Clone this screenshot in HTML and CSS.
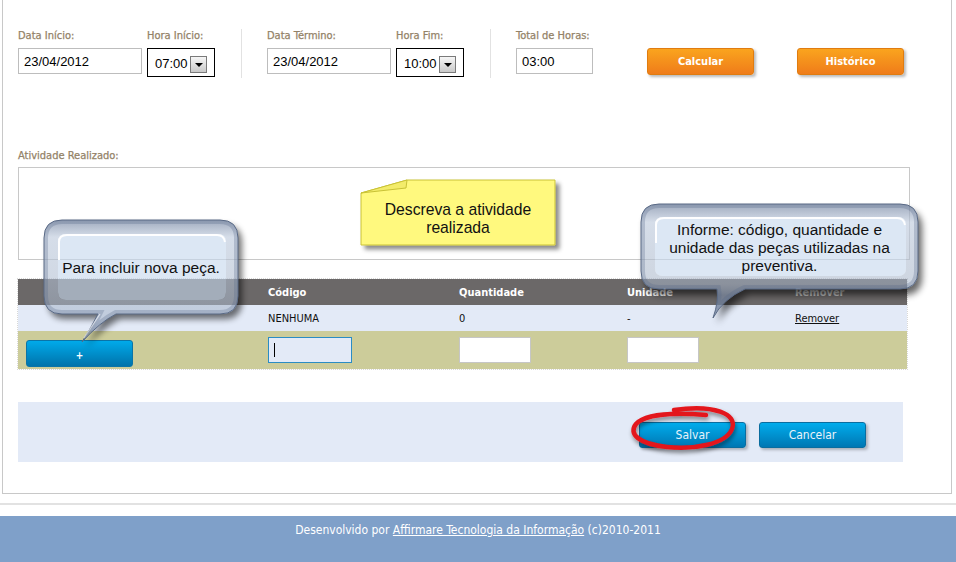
FILE: index.html
```html
<!DOCTYPE html>
<html lang="pt-BR">
<head>
<meta charset="utf-8">
<title>Preventiva</title>
<link rel="stylesheet" href="styles.css">
</head>
<body>
<div class="page">
  <div class="main">
    <div class="fields">
      <div class="field">
        <div class="lbl">Data Início:</div>
        <div class="inp w124">23/04/2012</div>
      </div>
      <div class="field">
        <div class="lbl">Hora Início:</div>
        <div class="sel"><span>07:00</span><span class="arrow"></span></div>
      </div>
      <div class="vsep"></div>
      <div class="field">
        <div class="lbl">Data Término:</div>
        <div class="inp w124">23/04/2012</div>
      </div>
      <div class="field">
        <div class="lbl">Hora Fim:</div>
        <div class="sel"><span>10:00</span><span class="arrow"></span></div>
      </div>
      <div class="vsep"></div>
      <div class="field">
        <div class="lbl">Total de Horas:</div>
        <div class="inp w77">03:00</div>
      </div>
      <div class="btn-orange calc">Calcular</div>
      <div class="btn-orange hist">Histórico</div>
    </div>

    <div class="activity">
      <div class="lbl">Atividade Realizado:</div>
      <div class="textarea"></div>
    </div>

    <div class="tbl">
      <div class="tr th">
        <div></div><div>Código</div><div>Quantidade</div><div>Unidade</div><div class="th-rem">Remover</div>
      </div>
      <div class="tr r1">
        <div></div><div>NENHUMA</div><div>0</div><div>-</div><div><span class="link">Remover</span></div>
      </div>
      <div class="tr r2">
        <div class="plus-cell"><div class="btn-plus">+</div></div>
        <div><div class="cell-inp focus w84"><span class="caret"></span></div></div>
        <div><div class="cell-inp w72"></div></div>
        <div><div class="cell-inp w72"></div></div>
        <div></div>
      </div>
    </div>

    <div class="actions">
      <div class="btn-blue">Salvar</div>
      <div class="btn-blue">Cancelar</div>
    </div>
  </div>

  <div class="rule"></div>
  <div class="footer">Desenvolvido por <span class="flink">Affirmare Tecnologia da Informação</span> (c)2010-2011</div>

  <!-- yellow note -->
  <div class="note">
    <svg width="215" height="82" viewBox="0 0 215 82">
      <defs>
        <filter id="nsh" x="-10%" y="-10%" width="130%" height="140%">
          <feDropShadow dx="4" dy="4" stdDeviation="2" flood-color="#000" flood-opacity="0.45"/>
        </filter>
      </defs>
      <polygon points="6,18 52,5 200,5 200,70 6,70" fill="#fff97e" stroke="#c9c236" stroke-width="1" filter="url(#nsh)"/>
      <polygon points="6,18 52,5 51,13" fill="#f3ec6a" stroke="#c9c236" stroke-width="1"/>
    </svg>
    <div class="note-text">Descreva a atividade<br>realizada</div>
  </div>

  <!-- left bubble -->
  <div class="bubble-left">
    <svg width="240" height="145" viewBox="0 0 240 145">
      <defs>
        <linearGradient id="ringL" x1="0" y1="0" x2="0" y2="1">
          <stop offset="0" stop-color="#7d8ca6" stop-opacity="0.75"/>
          <stop offset="0.14" stop-color="#bfcbdd" stop-opacity="0.65"/>
          <stop offset="0.8" stop-color="#a6b4c8" stop-opacity="0.55"/>
          <stop offset="1" stop-color="#76849c" stop-opacity="0.7"/>
        </linearGradient>
        <mask id="mL" maskUnits="userSpaceOnUse" x="0" y="0" width="240" height="145">
          <rect width="240" height="145" fill="#fff"/>
          <path d="M32 10 H190 Q208 10 208 28 V86 Q208 104 190 104 H86 Q70 112 52 132 Q62 116 68 104 H32 Q14 104 14 86 V28 Q14 10 32 10 Z" fill="#000"/>
        </mask>
        <clipPath id="cL">
          <path d="M32 10 H190 Q208 10 208 28 V86 Q208 104 190 104 H86 Q70 112 52 132 Q62 116 68 104 H32 Q14 104 14 86 V28 Q14 10 32 10 Z"/>
        </clipPath>
        <filter id="blurL" x="-20%" y="-20%" width="140%" height="140%">
          <feGaussianBlur stdDeviation="3"/>
        </filter>
      </defs>
      <g mask="url(#mL)">
        <path d="M32 10 H190 Q208 10 208 28 V86 Q208 104 190 104 H86 Q70 112 52 132 Q62 116 68 104 H32 Q14 104 14 86 V28 Q14 10 32 10 Z" transform="translate(4,5)" fill="#000" opacity="0.55" filter="url(#blurL)"/>
      </g>
      <path d="M36 24 H188 Q196 24 196 32 V82 Q196 90 188 90 H36 Q28 90 28 82 V32 Q28 24 36 24 Z" fill="#c7d8ee" fill-opacity="0.62"/>
      <path fill-rule="evenodd" fill="url(#ringL)" d="M32 10 H190 Q208 10 208 28 V86 Q208 104 190 104 H86 Q70 112 52 132 Q62 116 68 104 H32 Q14 104 14 86 V28 Q14 10 32 10 Z M36 24 H188 Q196 24 196 32 V82 Q196 90 188 90 H36 Q28 90 28 82 V32 Q28 24 36 24 Z"/>
      <g clip-path="url(#cL)">
        <path d="M32 10 H190 Q208 10 208 28 V86 Q208 104 190 104 H86 Q70 112 52 132 Q62 116 68 104 H32 Q14 104 14 86 V28 Q14 10 32 10 Z" fill="none" stroke="#56678a" stroke-opacity="0.28" stroke-width="8"/>
      </g>
      <path d="M32 10 H190 Q208 10 208 28 V86 Q208 104 190 104 H86 Q70 112 52 132 Q62 116 68 104 H32 Q14 104 14 86 V28 Q14 10 32 10 Z" fill="none" stroke="#5a6a86" stroke-width="1"/>
      <path d="M29 50 V32 Q29 25 37 25 H187 Q194 25 195 32" fill="none" stroke="#fff" stroke-width="2" stroke-opacity="0.95"/>
      <path d="M70 104 Q62 116 54 128" fill="none" stroke="#fff" stroke-width="1.2" stroke-opacity="0.6"/>
    </svg>
    <div class="bl-text">Para incluir nova peça.</div>
  </div>

  <!-- right bubble -->
  <div class="bubble-right">
    <svg width="315" height="140" viewBox="0 0 315 140">
      <defs>
        <linearGradient id="ringR" x1="0" y1="0" x2="0" y2="1">
          <stop offset="0" stop-color="#7d8ca6" stop-opacity="0.75"/>
          <stop offset="0.16" stop-color="#bfcbdd" stop-opacity="0.65"/>
          <stop offset="0.7" stop-color="#a6b4c8" stop-opacity="0.55"/>
          <stop offset="0.8" stop-color="#76849c" stop-opacity="0.7"/>
          <stop offset="1" stop-color="#8898b0" stop-opacity="0.7"/>
        </linearGradient>
        <mask id="mR" maskUnits="userSpaceOnUse" x="0" y="0" width="315" height="140">
          <rect width="315" height="140" fill="#fff"/>
          <path d="M34 9 H275 Q293 9 293 27 V76 Q293 94 275 94 H120 Q98 104 88 123 Q94 106 92 94 H34 Q16 94 16 76 V27 Q16 9 34 9 Z" fill="#000"/>
        </mask>
        <clipPath id="cR">
          <path d="M34 9 H275 Q293 9 293 27 V76 Q293 94 275 94 H120 Q98 104 88 123 Q94 106 92 94 H34 Q16 94 16 76 V27 Q16 9 34 9 Z"/>
        </clipPath>
        <filter id="blurR" x="-20%" y="-20%" width="140%" height="140%">
          <feGaussianBlur stdDeviation="3.5"/>
        </filter>
      </defs>
      <g mask="url(#mR)">
        <path d="M34 9 H275 Q293 9 293 27 V76 Q293 94 275 94 H120 Q98 104 88 123 Q94 106 92 94 H34 Q16 94 16 76 V27 Q16 9 34 9 Z" transform="translate(4,6)" fill="#000" opacity="0.6" filter="url(#blurR)"/>
      </g>
      <path d="M38 22 H273 Q281 22 281 30 V73 Q281 81 273 81 H38 Q30 81 30 73 V30 Q30 22 38 22 Z" fill="#c7d8ee" fill-opacity="0.62"/>
      <path fill-rule="evenodd" fill="url(#ringR)" d="M34 9 H275 Q293 9 293 27 V76 Q293 94 275 94 H120 Q98 104 88 123 Q94 106 92 94 H34 Q16 94 16 76 V27 Q16 9 34 9 Z M38 22 H273 Q281 22 281 30 V73 Q281 81 273 81 H38 Q30 81 30 73 V30 Q30 22 38 22 Z"/>
      <g clip-path="url(#cR)">
        <path d="M34 9 H275 Q293 9 293 27 V76 Q293 94 275 94 H120 Q98 104 88 123 Q94 106 92 94 H34 Q16 94 16 76 V27 Q16 9 34 9 Z" fill="none" stroke="#56678a" stroke-opacity="0.28" stroke-width="8"/>
      </g>
      <path d="M34 9 H275 Q293 9 293 27 V76 Q293 94 275 94 H120 Q98 104 88 123 Q94 106 92 94 H34 Q16 94 16 76 V27 Q16 9 34 9 Z" fill="none" stroke="#5a6a86" stroke-width="1"/>
      <path d="M31 48 V30 Q31 23 39 23 H272 Q279 23 280 30" fill="none" stroke="#fff" stroke-width="2" stroke-opacity="0.95"/>
    </svg>
    <div class="br-text">Informe: código, quantidade e<br>unidade das peças utilizadas na<br>preventiva.</div>
  </div>

  <!-- red hand-drawn circle -->
  <div class="redmark">
    <svg width="140" height="70" viewBox="0 0 140 70">
      <defs>
        <filter id="rsh" x="-10%" y="-10%" width="130%" height="150%">
          <feDropShadow dx="1" dy="3" stdDeviation="2" flood-color="#000" flood-opacity="0.45"/>
        </filter>
      </defs>
      <g filter="url(#rsh)">
        <path d="M54 12 C94 6 118 16 112 31 C106 46 74 52 47 49 C19 46 8 36 16 26 C24 17 50 14 86 17" fill="none" stroke="#e3161c" stroke-width="4.5" stroke-linecap="round"/>
        <path d="M54 12 C70 10 84 10 96 12" fill="none" stroke="#e3161c" stroke-width="2" stroke-linecap="round"/>
      </g>
    </svg>
  </div>
</div>
</body>
</html>
```

FILE: styles.css
```css
html, body {
  margin: 0;
  padding: 0;
  background: #fff;
}
body {
  font-family: "DejaVu Sans Condensed", "DejaVu Sans", sans-serif;
  font-size: 11px;
  color: #222;
  overflow: hidden;
}
.page {
  position: relative;
  width: 956px;
  height: 562px;
  overflow: hidden;
}
.main {
  margin-left: 2px;
  width: 933px;
  border-left: 1px solid #c8c8c8;
  border-right: 1px solid #c8c8c8;
  border-bottom: 1px solid #c8c8c8;
  padding: 29px 0 31px 15px;
  box-sizing: content-box;
}
.main > * { box-sizing: border-box; }
.fields {
  display: flex;
  align-items: flex-start;
  height: 49px;
}
.field {
  display: flex;
  flex-direction: column;
  margin-right: 5px;
}
.lbl {
  color: #938267;
  -webkit-text-stroke: 0.25px #938267;
  font-size: 11px;
  line-height: 13px;
  height: 13px;
  margin-bottom: 6px;
  white-space: nowrap;
}
.inp {
  height: 26px;
  border: 1px solid #bdbdbd;
  box-sizing: border-box;
  font-family: "Liberation Sans", Arial, sans-serif;
  font-size: 13px;
  line-height: 25px;
  padding-left: 5px;
  color: #000;
}
.w124 { width: 124px; }
.w77 { width: 77px; }
.sel {
  width: 68px;
  height: 29px;
  border: 1px solid #000;
  box-sizing: border-box;
  display: flex;
  align-items: center;
  padding-left: 7px;
  font-family: "Liberation Sans", Arial, sans-serif;
  font-size: 13px;
  color: #000;
}
.sel span:first-child { margin-top: 2px; }
.arrow {
  position: relative;
  width: 17px;
  height: 17px;
  margin-left: 2px;
  margin-top: 3px;
  box-sizing: border-box;
  border: 1px solid #7a7a7a;
  background: linear-gradient(#f6f6f6, #c9c9c9);
}
.arrow::after {
  content: "";
  position: absolute;
  left: 4px;
  top: 6px;
  border-left: 4px solid transparent;
  border-right: 4px solid transparent;
  border-top: 4px solid #000;
}
.vsep {
  width: 1px;
  height: 49px;
  background: #e2e2e2;
  margin: 0 25px 0 21px;
}
.btn-orange {
  width: 107px;
  height: 27px;
  margin-top: 19px;
  box-sizing: border-box;
  border: 1px solid #e07c10;
  border-radius: 3px;
  background: linear-gradient(#faa41e, #ef7c1a);
  box-shadow: 2px 2px 3px rgba(0, 0, 0, 0.28);
  color: #fff;
  font-weight: bold;
  font-size: 11px;
  display: flex;
  align-items: center;
  justify-content: center;
}
.calc { margin-left: 49px; }
.hist { margin-left: 43px; }

.activity { margin-top: 71px; }
.activity .lbl { margin-bottom: 5px; }
.textarea {
  width: 892px;
  height: 93px;
  border: 1px solid #c8c8c8;
  box-sizing: border-box;
}

.tbl {
  margin-top: 19px;
  width: 889px;
  outline: 1px dotted #d8d8d8;
}
.tr {
  display: grid;
  grid-template-columns: 250px 191px 168px 168px 1fr;
  align-items: center;
}
.th {
  height: 26px;
  background: #6b6868;
  color: #fff;
  font-weight: bold;
}
.th-rem { color: #c4c4c4; }
.r1 {
  height: 26px;
  background: #e3eaf7;
  color: #111;
}
.link { text-decoration: underline; }
.r2 {
  height: 38px;
  background: #cccc9a;
}
.plus-cell {
  align-self: end;
  padding-left: 8px;
  padding-bottom: 2px;
}
.btn-plus {
  width: 107px;
  height: 27px;
  box-sizing: border-box;
  border: 1px solid #0a74a8;
  border-radius: 3px;
  background: linear-gradient(#00aaea, #0073ab);
  color: #fff;
  font-size: 10px;
  font-weight: bold;
  display: flex;
  align-items: center;
  justify-content: center;
  padding-top: 3px;
}
.cell-inp {
  height: 26px;
  box-sizing: border-box;
  border: 1px solid #c6c6c6;
  background: #fff;
  position: relative;
}
.cell-inp.focus {
  border: 1px solid #2a8cc4;
  background: #e3eaf7;
}
.caret {
  position: absolute;
  left: 5px;
  top: 5px;
  width: 1px;
  height: 14px;
  background: #000;
}
.w84 { width: 84px; }
.w72 { width: 72px; }

.actions {
  margin-top: 33px;
  width: 885px;
  height: 60px;
  background: #e3eaf7;
  display: flex;
  justify-content: flex-end;
  align-items: flex-start;
  gap: 13px;
  padding: 20px 37px 0 0;
}
.btn-blue {
  width: 107px;
  height: 26px;
  box-sizing: border-box;
  border: 1px solid #0a6d9f;
  border-radius: 3px;
  background: linear-gradient(#00acec, #0077b3);
  box-shadow: 2px 2px 3px rgba(0, 0, 0, 0.25);
  color: #e9f3fa;
  font-size: 12px;
  display: flex;
  align-items: center;
  justify-content: center;
}

.rule {
  margin-top: 9px;
  height: 0;
  border-top: 2px solid #e2e2e2;
}
.footer {
  margin-top: 11px;
  height: 46px;
  background: #7fa0c9;
  color: #fff;
  font-size: 12px;
  text-align: center;
  padding-top: 7px;
  box-sizing: border-box;
}
.flink { text-decoration: underline; }

/* overlays */
.note {
  position: absolute;
  left: 355px;
  top: 175px;
  width: 215px;
  height: 82px;
}
.note svg, .bubble-left svg, .bubble-right svg, .redmark svg { display: block; }
.note-text {
  position: absolute;
  left: 6px;
  top: 26px;
  width: 194px;
  text-align: center;
  font-family: "Liberation Sans", Arial, sans-serif;
  font-size: 15.7px;
  line-height: 18px;
  color: #111;
}
.bubble-left {
  position: absolute;
  left: 30px;
  top: 210px;
  width: 240px;
  height: 145px;
}
.bl-text {
  position: absolute;
  left: 14px;
  top: 49px;
  width: 194px;
  text-align: center;
  font-family: "Liberation Sans", Arial, sans-serif;
  font-size: 15.5px;
  line-height: 18px;
  color: #111;
}
.bubble-right {
  position: absolute;
  left: 625px;
  top: 195px;
  width: 315px;
  height: 140px;
}
.br-text {
  position: absolute;
  left: 16px;
  top: 26px;
  width: 277px;
  text-align: center;
  font-family: "Liberation Sans", Arial, sans-serif;
  font-size: 15.5px;
  line-height: 18px;
  color: #111;
}
.redmark {
  position: absolute;
  left: 620px;
  top: 398px;
  width: 140px;
  height: 70px;
}
```
